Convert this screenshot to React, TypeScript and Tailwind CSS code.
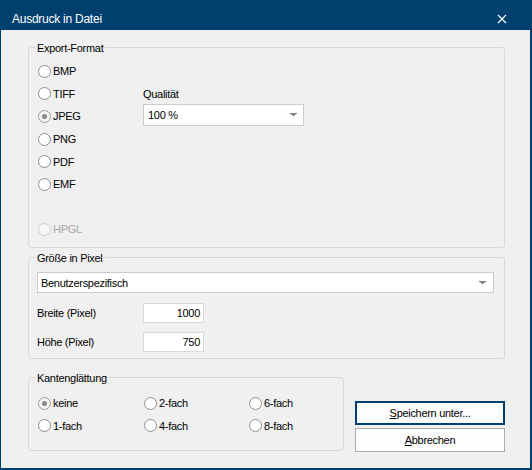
import React from "react";

function Radio({ label, checked = false, disabled = false }: { label: string; checked?: boolean; disabled?: boolean }) {
  return (
    <div className="flex items-center h-[22.6px]">
      <span
        className={
          disabled
            ? "w-[13px] h-[13px] rounded-full border border-[#cbcbcb] bg-[#f7f7f7] flex items-center justify-center"
            : checked
            ? "w-[13px] h-[13px] rounded-full border border-[#a0a0a0] bg-[#f3f3f3] flex items-center justify-center"
            : "w-[13px] h-[13px] rounded-full border border-[#8f8f8f] bg-white flex items-center justify-center"
        }
      >
        {checked && <span className="w-[5px] h-[5px] rounded-full bg-[#8a8a8a]" />}
      </span>
      <span className={disabled ? "ml-[2px] leading-[14px] text-[#a6a6a6]" : "ml-[2px] leading-[14px] text-black"}>{label}</span>
    </div>
  );
}

function Arrow() {
  return (
    <svg width="7" height="4" viewBox="0 0 7 4" className="block">
      <rect x="0" y="0" width="7" height="1" fill="#7a7a7a" />
      <polygon points="1,1 6,1 3.5,3.5" fill="#7a7a7a" />
    </svg>
  );
}

function Group({ title, className, children }: { title: string; className: string; children: React.ReactNode }) {
  return (
    <div className={"relative border border-[#d9d9d9] rounded-[3px] " + className}>
      <span className="absolute left-[6px] top-[-7px] px-[2px] bg-[#f0f0f0] leading-[14px] text-black">{title}</span>
      {children}
    </div>
  );
}

export default function App() {
  return (
    <div
      className="w-[532px] h-[470px] bg-[#f0f0f0] border-l border-r-2 border-b-2 border-[#00406f] flex flex-col text-[11px] tracking-[-0.3px] text-black"
      style={{ fontFamily: '"Liberation Sans", Arial, sans-serif' }}
    >
      <div className="h-[30px] shrink-0 bg-[#00406f] flex items-start justify-between">
        <div className="pt-[11px] pl-[11px] text-[12px] tracking-[-0.25px] leading-[16px] text-white">Ausdruck in Datei</div>
        <div className="pt-[14px] pr-[23px]">
          <svg width="10" height="10" viewBox="0 0 10 10" className="block">
            <path d="M1 1 L9 9 M9 1 L1 9" stroke="white" strokeWidth="1.2" />
          </svg>
        </div>
      </div>

      <div className="flex flex-col pl-[27px]">
        <Group title="Export-Format" className="mt-[17px] w-[477px] h-[201px]">
          <div className="flex pl-[9px] pt-[12px]">
            <div className="w-[105px] flex flex-col">
              <Radio label="BMP" />
              <Radio label="TIFF" />
              <Radio label="JPEG" checked />
              <Radio label="PNG" />
              <Radio label="PDF" />
              <Radio label="EMF" />
              <div className="h-[22.6px]" />
              <Radio label="HPGL" disabled />
            </div>
            <div className="flex flex-col">
              <div className="h-[22.6px]" />
              <div className="h-[22.6px] flex items-center leading-[14px]">Qualität</div>
              <div className="mt-[-1px] w-[161px] h-[22px] bg-white border border-[#cccccc] flex items-center justify-between pl-[4px] pr-[6px]">
                <span className="leading-[14px]">100 %</span>
                <Arrow />
              </div>
            </div>
          </div>
        </Group>

        <Group title="Größe in Pixel" className="mt-[9px] w-[477px] h-[102px]">
          <div className="flex flex-col pl-[8px] pt-[14px]">
            <div className="w-[457px] h-[21px] bg-white border border-[#cccccc] flex items-center justify-between pl-[3px] pr-[7px]">
              <span className="leading-[14px]">Benutzerspezifisch</span>
              <Arrow />
            </div>
            <div className="flex items-center mt-[10px]">
              <span className="w-[106px] leading-[14px]">Breite (Pixel)</span>
              <div className="w-[61px] h-[20px] bg-white border border-[#d9d9d9] flex items-center justify-end pr-[3px] leading-[14px]">1000</div>
            </div>
            <div className="flex items-center mt-[9px]">
              <span className="w-[106px] leading-[14px]">Höhe (Pixel)</span>
              <div className="w-[61px] h-[20px] bg-white border border-[#d9d9d9] flex items-center justify-end pr-[3px] leading-[14px]">750</div>
            </div>
          </div>
        </Group>

        <div className="mt-[18px] w-[477px] flex items-end justify-between">
          <Group title="Kantenglättung" className="w-[316px] h-[74px]">
            <div className="grid grid-cols-[106px_105px_1fr] pl-[9px] pt-[14px]">
              <Radio label="keine" checked />
              <Radio label="2-fach" />
              <Radio label="6-fach" />
              <Radio label="1-fach" />
              <Radio label="4-fach" />
              <Radio label="8-fach" />
            </div>
          </Group>
          <div className="flex flex-col gap-[3px] w-[150px] mb-[-1px]">
            <div className="h-[24px] bg-[#fdfdfd] border-2 border-[#00406f] flex items-center justify-center leading-[14px]">
              <span>
                <span className="underline">S</span>peichern unter...
              </span>
            </div>
            <div className="h-[24px] bg-[#fdfdfd] border border-[#adadad] flex items-center justify-center leading-[14px]">
              <span>
                <span className="underline">A</span>bbrechen
              </span>
            </div>
          </div>
        </div>
      </div>
    </div>
  );
}
